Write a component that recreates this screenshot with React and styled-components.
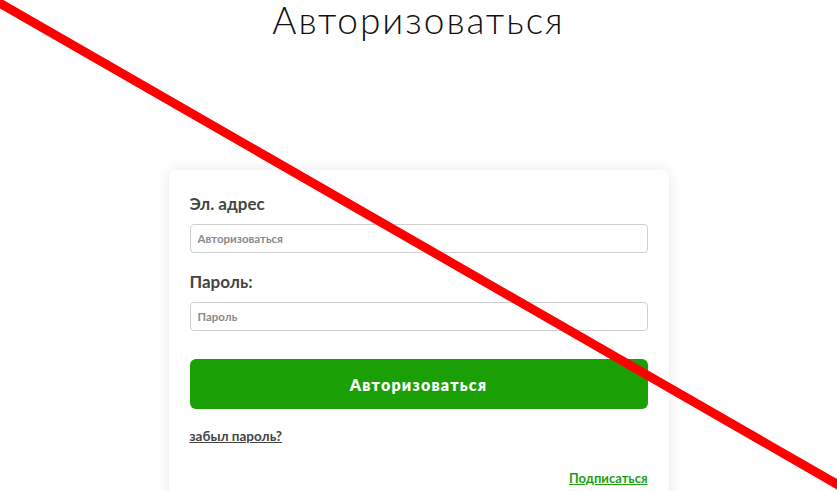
import React from "react";
import styled, { createGlobalStyle } from "styled-components";

const Global = createGlobalStyle`
  html, body { margin: 0; padding: 0; background: #fff; }
  body { width: 837px; height: 491px; overflow: hidden; position: relative; }
  * { box-sizing: border-box; }
`;

const Page = styled.div`
  display: flex;
  flex-direction: column;
  align-items: center;
  width: 837px;
  height: 491px;
  overflow: hidden;
  font-family: "Lato", "Noto Sans", sans-serif;
  & > * { flex-shrink: 0; }
`;

const Title = styled.h1`
  margin: 0;
  height: 170px;
  padding-top: 1px;
  font-family: "Lato", sans-serif;
  font-weight: 300;
  font-size: 37px;
  line-height: 38px;
  letter-spacing: 2px;
  color: #111;
`;

const Card = styled.div`
  width: 500px;
  background: #fff;
  border-radius: 7px;
  box-shadow: 0 0 14px rgba(0, 0, 0, 0.09);
  padding: 24px 21px 30px;
  display: flex;
  flex-direction: column;
`;

const Label = styled.label`
  font-weight: 700;
  font-size: 17px;
  line-height: 20px;
  color: #454545;
  margin-bottom: 10px;
`;

const Input = styled.input`
  height: 29px;
  border: 1px solid #cfcfcf;
  border-radius: 4px;
  padding: 0 7px;
  font-family: "Lato", sans-serif;
  font-weight: 700;
  font-size: 11.5px;
  margin-bottom: ${(p) => p.$mb || 0}px;
  &::placeholder { color: #8a8a8a; }
`;

const Button = styled.button`
  margin-top: 28px;
  height: 50px;
  border: none;
  border-radius: 6px;
  background: #1aa004;
  color: #fff;
  font-family: "Lato", sans-serif;
  font-weight: 800;
  font-size: 16px;
  letter-spacing: 1.2px;
`;

const Links = styled.div`
  display: flex;
  flex-direction: column;
  margin-top: 19px;
`;

const Link = styled.a`
  font-weight: 700;
  font-size: ${(p) => p.$size || 13}px;
  line-height: 16px;
  color: ${(p) => (p.$green ? "#22a010" : "#454545")};
  text-decoration: underline;
  align-self: ${(p) => (p.$right ? "flex-end" : "flex-start")};
  margin-top: ${(p) => p.$mt || 0}px;
`;

const Cross = styled.svg`
  position: absolute;
  left: 0;
  top: 0;
  pointer-events: none;
`;

export default function App() {
  return (
    <>
      <Global />
      <Page>
        <Title>Авторизоваться</Title>
        <Card>
          <Label>Эл. адрес</Label>
          <Input placeholder="Авторизоваться" $mb={19} />
          <Label>Пароль:</Label>
          <Input type="password" placeholder="Пароль" />
          <Button>Авторизоваться</Button>
          <Links>
            <Link href="#" $size={13.5}>забыл пароль?</Link>
            <Link href="#" $green $right $mt={26}>Подписаться</Link>
          </Links>
        </Card>
      </Page>
      <Cross width="837" height="491" viewBox="0 0 837 491">
        <line x1="-10" y1="-2.5" x2="847" y2="490" stroke="#ff0000" strokeWidth="9" />
      </Cross>
    </>
  );
}
